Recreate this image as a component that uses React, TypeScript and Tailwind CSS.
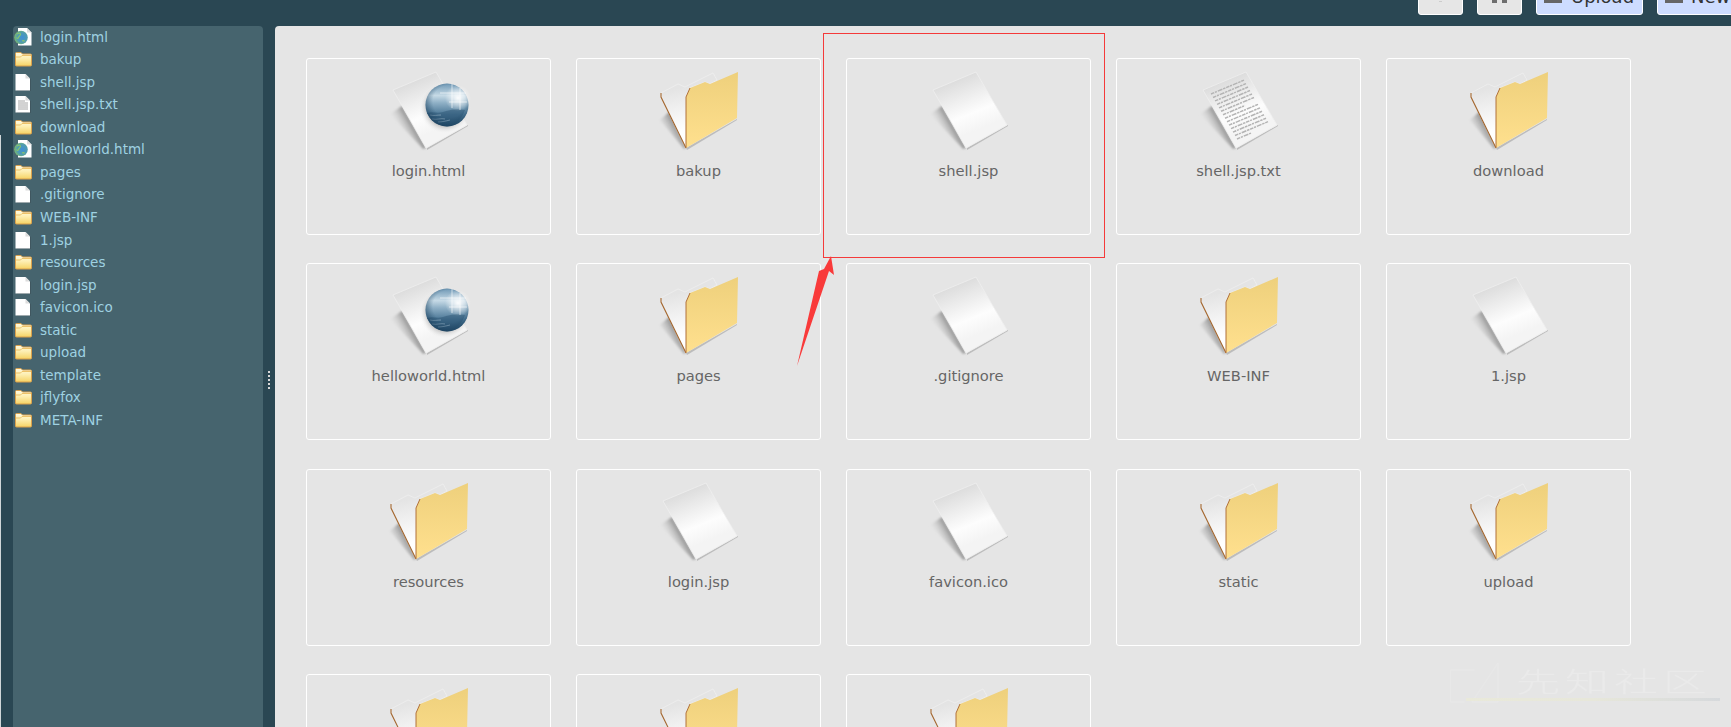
import React from "react";

type Kind = "html" | "folder" | "doc" | "txt";
const items: [string, Kind][] = [
  ["login.html", "html"],
  ["bakup", "folder"],
  ["shell.jsp", "doc"],
  ["shell.jsp.txt", "txt"],
  ["download", "folder"],
  ["helloworld.html", "html"],
  ["pages", "folder"],
  [".gitignore", "doc"],
  ["WEB-INF", "folder"],
  ["1.jsp", "doc"],
  ["resources", "folder"],
  ["login.jsp", "doc"],
  ["favicon.ico", "doc"],
  ["static", "folder"],
  ["upload", "folder"],
  ["template", "folder"],
  ["jflyfox", "folder"],
  ["META-INF", "folder"],
];

function Defs() {
  return (
    <svg className="absolute w-0 h-0" aria-hidden="true">
      <defs>
        <linearGradient id="pageG" gradientUnits="userSpaceOnUse" x1="40" y1="8" x2="62" y2="62">
          <stop offset="0" stopColor="#d9d9d9" />
          <stop offset="0.7" stopColor="#fdfdfd" />
          <stop offset="1" stopColor="#f4f4f4" />
        </linearGradient>
        <linearGradient id="shadowG" gradientUnits="userSpaceOnUse" x1="34" y1="60" x2="20" y2="68">
          <stop offset="0" stopColor="#8a8a8a" />
          <stop offset="1" stopColor="#e5e5e5" stopOpacity="0.1" />
        </linearGradient>
        <linearGradient id="folderShadowG" gradientUnits="userSpaceOnUse" x1="27" y1="60" x2="12" y2="68">
          <stop offset="0" stopColor="#888888" />
          <stop offset="1" stopColor="#e5e5e5" stopOpacity="0.1" />
        </linearGradient>
        <linearGradient id="frontG" x1="0" y1="0" x2="0" y2="1">
          <stop offset="0" stopColor="#eed07c" />
          <stop offset="1" stopColor="#ffe08e" />
        </linearGradient>
        <linearGradient id="backG" gradientUnits="userSpaceOnUse" x1="20" y1="24" x2="30" y2="66">
          <stop offset="0" stopColor="#e4e4e4" />
          <stop offset="1" stopColor="#ffffff" />
        </linearGradient>
        <linearGradient id="globeG" x1="0" y1="0" x2="0" y2="1">
          <stop offset="0" stopColor="#6f98b5" />
          <stop offset="0.28" stopColor="#c6dae6" />
          <stop offset="0.45" stopColor="#8fb0c6" />
          <stop offset="0.72" stopColor="#4b7796" />
          <stop offset="1" stopColor="#234c6a" />
        </linearGradient>
        <radialGradient id="globeEdge" cx="0.55" cy="0.42" r="0.58">
          <stop offset="0.65" stopColor="#1f4765" stopOpacity="0" />
          <stop offset="1" stopColor="#1b3f5c" stopOpacity="0.55" />
        </radialGradient>
        <radialGradient id="halo" cx="0.5" cy="0.5" r="0.5">
          <stop offset="0.7" stopColor="#9a9a9a" stopOpacity="0.5" />
          <stop offset="1" stopColor="#ffffff" stopOpacity="0" />
        </radialGradient>
        <radialGradient id="glow" cx="0.5" cy="0.5" r="0.5">
          <stop offset="0" stopColor="#ffffff" stopOpacity="0.95" />
          <stop offset="1" stopColor="#ffffff" stopOpacity="0" />
        </radialGradient>
        <linearGradient id="smallFolder" x1="0" y1="0" x2="0" y2="1">
          <stop offset="0" stopColor="#fffbe2" />
          <stop offset="0.45" stopColor="#fdeeb0" />
          <stop offset="1" stopColor="#f6d364" />
        </linearGradient>
        <radialGradient id="smallGlobe" cx="0.6" cy="0.5" r="0.6">
          <stop offset="0" stopColor="#3f8fd6" />
          <stop offset="0.6" stopColor="#4f9bb0" />
          <stop offset="1" stopColor="#7dbb6c" />
        </radialGradient>
        <filter id="soft" x="-30%" y="-30%" width="160%" height="160%">
          <feGaussianBlur stdDeviation="1.2" />
        </filter>
        <filter id="softer" x="-5%" y="-5%" width="110%" height="110%">
          <feGaussianBlur stdDeviation="0.5" />
        </filter>
      </defs>
    </svg>
  );
}

function Sheet() {
  return (
    <>
      <polygon points="22,40 10,48 43,83 46,82" fill="url(#shadowG)" filter="url(#soft)" />
      <polygon points="47,82 88,59 88,60 47,84" fill="#bdbdbd" />
      <polygon points="13,24 56,6 87,59 46,82" fill="url(#pageG)" stroke="#efefef" strokeWidth="0.8" />
    </>
  );
}

function BigIcon({ kind }: { kind: Kind }) {
  if (kind === "folder") {
    return (
      <svg viewBox="0 0 97 96" className="w-[97px] h-[96px] shrink-0">
        <polygon points="19,46 10,54 34,83 36,82" fill="url(#folderShadowG)" filter="url(#soft)" />
        <polygon points="40,22 63,7 67,14 60,18 55,16" fill="#dcdcdc" stroke="#f2f2f2" strokeWidth="0.6" strokeDasharray="1 1" />
        <polygon points="11,31 11,27 28,18 35,21 63,7 67,14 60,18 55,16 40,22 36,31 36,82" fill="url(#backG)" stroke="#f5f5f5" strokeWidth="0.5" />
        <polyline points="11,27 11,31 36,82" fill="none" stroke="#a4672f" strokeWidth="1.1" />
        <polygon points="36,82 87,53 87,54 37,84" fill="#bcbcbc" />
        <polygon points="36,31 40,22 55,16 60,18 88,6 87,52 36,82" fill="url(#frontG)" />
        <polyline points="40,22 36,31 36,82" fill="none" stroke="#b0703a" strokeWidth="1" />
      </svg>
    );
  }
  if (kind === "html") {
    return (
      <svg viewBox="0 0 97 96" className="w-[97px] h-[96px] shrink-0">
        <Sheet />
        <circle cx="65" cy="42" r="26" fill="url(#halo)" />
        <circle cx="67" cy="39" r="21.5" fill="url(#globeG)" />
        <path d="M47 47c6-2 10 1 16-1s12-4 22-2c-3 9-10 16-18 16-9 0-16-5-20-13z" fill="#27506f" opacity="0.45" />
        <path d="M52 53c5 1 9-1 13 0M58 56c4 0 8-1 12-2M50 49c4 1 7 0 11 0" stroke="#a7c0d1" strokeWidth="0.8" fill="none" opacity="0.7" />
        <circle cx="67" cy="39" r="21.5" fill="url(#globeEdge)" />
        <circle cx="78" cy="32" r="13" fill="url(#glow)" />
        <path d="M60 27h26M72 18v24M80 22v22M69 36h18" stroke="#ffffff" strokeWidth="0.8" fill="none" opacity="0.75" />
      </svg>
    );
  }
  if (kind === "txt") {
    const lines = Array.from({ length: 14 }, (_, i) => i);
    return (
      <svg viewBox="0 0 97 96" className="w-[97px] h-[96px] shrink-0">
        <Sheet />
        <g filter="url(#softer)">
          {lines.map((i) => {
            const t = i / 13;
            const x1 = 21 + t * 26;
            const y1 = 28 + t * 45;
            const w = i === 13 ? 14 : i === 6 ? 22 : 33;
            const x2 = x1 + w;
            const y2 = y1 - w * 0.42;
            return (
              <line
                key={i}
                x1={x1}
                y1={y1}
                x2={x2}
                y2={y2}
                stroke="#b4b4b4"
                strokeWidth="1.5"
                strokeDasharray="3.5 0.8 2 1 5 0.8 2.5 0.8"
              />
            );
          })}
        </g>
      </svg>
    );
  }
  return (
    <svg viewBox="0 0 97 96" className="w-[97px] h-[96px] shrink-0">
      <Sheet />
    </svg>
  );
}

function SmallIcon({ kind }: { kind: Kind }) {
  if (kind === "folder") {
    return (
      <svg viewBox="0 0 20 20" className="w-5 h-5 shrink-0">
        <path d="M2.500 4.500q0-1 1-1h4.500l1.500 1.500h8q1 0 1 1v10q0 1-1 1h-14q-1 0-1-1z" fill="url(#smallFolder)" stroke="#d9a04d" strokeWidth="1" />
        <path d="M3 8h4.500l1.500-1.500h9" fill="none" stroke="#ebbc5c" strokeWidth="0.9" />
      </svg>
    );
  }
  if (kind === "html") {
    return (
      <svg viewBox="0 0 20 20" className="w-5 h-5 shrink-0">
        <path d="M5 1h9l4.500 4.500v13h-13.500z" fill="#fff" />
        <path d="M14 1v4.500h4.500z" fill="#dcdcdc" />
        <circle cx="8" cy="10.500" r="6.800" fill="url(#smallGlobe)" />
        <path d="M4 7c1.500-1 3-1 3.500 0s-1.500 2-2 3.500-1.500 1-2 0M9 14c1-.5 2-.5 2.500.5" stroke="#86c26f" strokeWidth="1.200" fill="none" />
      </svg>
    );
  }
  return (
    <svg viewBox="0 0 20 20" className="w-5 h-5 shrink-0">
      <path d="M3 2.500h10l4 4v12h-14z" fill="#333f44" opacity="0.45" transform="translate(0.7 0.5)" />
      <path d="M2.500 2h10l4.500 4.500v12h-14.500z" fill="#ffffff" />
      <path d="M12.500 2v4.500h4.500z" fill="#dcdcdc" />
      {kind === "txt" && (
        <path d="M5 7h7M5 9h10M5 11h10M5 13h10M5 15h10" stroke="#9c9c9c" strokeWidth="0.9" />
      )}
    </svg>
  );
}

function TopBar() {
  const btn = "h-[40px] rounded-[3px] border border-white flex items-end shrink-0";
  return (
    <header className="h-[26px] bg-[#2a4753] overflow-hidden flex items-end justify-end gap-[14px] pb-[11px] pr-0 -mr-[60px] shrink-0">
      <div className={`${btn} w-[45px] bg-[#e6e6e6] justify-center`}>
        <span className="w-[3px] h-[1px] mb-[12px] bg-[#cccccc]" />
      </div>
      <div className={`${btn} w-[45px] bg-[#e6e6e6] justify-center gap-[5px] pb-[11px]`}>
        <span className="w-[5px] h-[4px] bg-[#6e6e6e]" />
        <span className="w-[5px] h-[4px] bg-[#6e6e6e]" />
      </div>
      <div className={`${btn} w-[107px] bg-[#cddcff] pl-[7px] pb-[11px] gap-[10px] relative`}>
        <span className="w-[18px] h-[4px] bg-[#666666]" />
        <span className="absolute left-[34px] bottom-[5px] text-[18px] leading-[24px] text-[#333333]">Upload</span>
      </div>
      <div className={`${btn} w-[134px] bg-[#cddcff] pl-[7px] pb-[11px] gap-[10px] relative`}>
        <span className="w-[18px] h-[4px] bg-[#666666]" />
        <span className="absolute left-[33px] bottom-[5px] text-[18px] leading-[24px] text-[#333333]">New</span>
      </div>
    </header>
  );
}

function Sidebar() {
  return (
    <aside className="w-[250px] shrink-0 bg-[#46646e] rounded-t-[4px] flex flex-col">
      <div className="-mt-[0.5px] flex flex-col">
        {items.map(([name, kind]) => (
          <div key={name} className="h-[22.54px] flex items-center gap-[7px] shrink-0">
            <SmallIcon kind={kind} />
            <span className="text-[13.5px] leading-[20px] text-[#9fd2e2]">{name}</span>
          </div>
        ))}
      </div>
    </aside>
  );
}

function Card({ name, kind }: { name: string; kind: Kind }) {
  return (
    <div className="h-[177px] rounded-[3px] border border-white pt-[7px] flex flex-col items-center">
      <BigIcon kind={kind} />
      <span className="-mt-px text-[14.67px] leading-[20px] text-[#666666]">{name}</span>
    </div>
  );
}

export default function App() {
  return (
    <div
      className="relative h-screen w-full overflow-hidden bg-[#2a4753] flex flex-col"
      style={{ fontFamily: '"DejaVu Sans", "Noto Sans CJK SC", sans-serif' }}
    >
      <Defs />
      <TopBar />
      <div className="flex flex-1 min-h-0 relative">
        <div className="w-px bg-[#cfd6d8] mt-[109px] shrink-0" />
        <div className="w-[12px] shrink-0" />
        <Sidebar />
        <div className="w-[12px] shrink-0 flex flex-col items-center pt-[345px]">
          <div className="h-[18px] w-0 border-l-2 border-dotted border-[#d8d8d8]" />
        </div>
        <main className="flex-1 bg-[#e5e5e5] rounded-tl-[4px] pl-[31px] pt-[32px] overflow-hidden">
          <div className="grid grid-cols-[repeat(5,245px)] gap-x-[25px] gap-y-[28.33px]">
            {items.map(([name, kind]) => (
              <Card key={name} name={name} kind={kind} />
            ))}
          </div>
        </main>
      </div>

      {/* screenshot annotations */}
      <div className="absolute left-[823px] top-[33px] w-[282px] h-[225px] border border-[#f43a3a]" />
      <svg className="absolute left-[790px] top-[250px] w-[50px] h-[120px]" viewBox="790 250 50 120">
        <polygon points="831,256 834,275 829,271 797,366 819,271 824,269" fill="#f93a3a" />
      </svg>

      {/* faint watermark */}
      <div className="absolute left-[1450px] top-[658px] w-[270px] h-[50px] flex items-center opacity-40">
        <svg viewBox="0 0 52 42" className="w-[52px] h-[42px] shrink-0">
          <path d="M0.500 8h24M0.500 8v32h14M48 1v39H22L48 1z" fill="none" stroke="#eeeeee" strokeWidth="1" />
        </svg>
        <span className="ml-[14px] text-[44px] leading-[44px] tracking-[5px] text-[#f2f2f2] scale-y-[0.62] font-light whitespace-nowrap">
          先知社区
        </span>
      </div>
      <div className="absolute left-[1466px] top-[698px] w-[254px] h-[3px] bg-gradient-to-r from-[#e9e9da] via-[#e7e7da] to-[#d6d9dc]" />
    </div>
  );
}
